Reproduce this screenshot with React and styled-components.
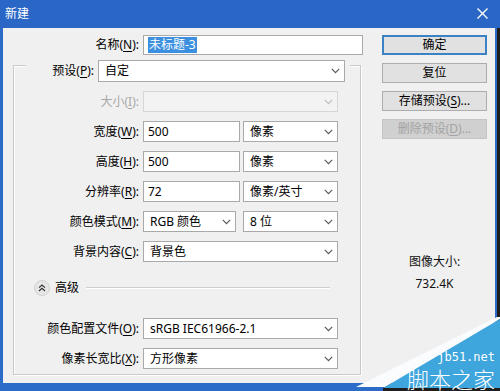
import React from 'react';
import styled, { createGlobalStyle } from 'styled-components';

const Global = createGlobalStyle`
  html, body { margin: 0; padding: 0; background: #1c1c1c; }
  body { font-family: "Noto Sans", "Noto Sans CJK SC", sans-serif; font-size: 12px; color: #000; }
  #root { width: 500px; height: 391px; overflow: hidden; }
  * { box-sizing: border-box; }
`;

const Window = styled.div`
  position: relative;
  width: 500px;
  height: 391px;
  display: flex;
  flex-direction: column;
  background: #2c6bc8;
  overflow: hidden;
`;

const TitleBar = styled.div`
  height: 28px;
  flex: none;
  display: flex;
  align-items: center;
  justify-content: space-between;
  padding: 0 12px 2px 5px;
  color: #fff;
  font-size: 12px;
  background: #2a66c6;
`;

const Frame = styled.div`
  flex: 1;
  display: flex;
  padding: 0 2px 8px 3px;
  border-right: 3px solid #1d1d1d;
`;

const Body = styled.div`
  flex: 1;
  display: flex;
  background: #f0f0f0;
  padding-top: 7px;
`;

const LeftCol = styled.div`
  width: 360px;
  flex: none;
  display: flex;
  flex-direction: column;
`;

const NameRow = styled.div`
  display: grid;
  grid-template-columns: 136px 220px;
  column-gap: 4px;
  align-items: center;
  height: 20px;
`;

const Label = styled.label`
  text-align: right;
  white-space: nowrap;
  line-height: 16px;
  color: ${p => (p.$disabled ? '#a8a8a8' : '#000')};
  u { text-decoration: underline; text-underline-offset: 2px; }
`;

const TextInput = styled.div`
  width: ${p => p.$w}px;
  height: ${p => p.$h || 21}px;
  display: flex;
  align-items: center;
  padding-left: 4px;
  background: #fff;
  border: 1px solid #a9a9a9;
  line-height: 16px;
  white-space: nowrap;
`;

const Selected = styled.span`
  background: #3d8fe0;
  color: #fff;
  padding: 0 1px;
`;

const GroupBox = styled.div`
  margin: 10px 0 0 10px;
  width: 348px;
  border: 1px solid #c9c9c9;
  box-shadow: inset 1px 1px 0 #fff, 1px 1px 0 #fff;
  display: flex;
  flex-direction: column;
  gap: 9px;
  padding-bottom: 5px;
`;

const PresetRow = styled.div`
  align-self: flex-start;
  margin: -6px 0 0 12px;
  padding: 0 5px 0 21px;
  display: grid;
  grid-template-columns: 47px 247px;
  column-gap: 4px;
  align-items: center;
  background: #f0f0f0;
`;

const FieldRow = styled.div`
  display: grid;
  grid-template-columns: 125px 195px;
  column-gap: 4px;
  align-items: center;
  height: 21px;
`;

const Controls = styled.div`
  display: flex;
  justify-content: space-between;
  width: 195px;
`;

const SelectBox = styled.div`
  width: ${p => p.$w}px;
  height: ${p => p.$h || 21}px;
  display: flex;
  align-items: center;
  justify-content: space-between;
  padding: 0 4px 0 6px;
  background: ${p => (p.$disabled ? '#f3f3f3' : '#fff')};
  border: 1px solid ${p => (p.$disabled ? '#d6d6d6' : '#a9a9a9')};
  line-height: 16px;
  white-space: nowrap;
`;

const AdvancedRow = styled.div`
  display: flex;
  align-items: center;
  height: 16px;
  margin: 9px 0 13px;
  padding-left: 20px;
  gap: 5px;
`;

const RoundIcon = styled.span`
  width: 16px;
  height: 16px;
  border-radius: 50%;
  background: #e6e6e6;
  border: 1px solid #d2d2d2;
  display: flex;
  align-items: center;
  justify-content: center;
`;

const AdvText = styled.span`
  line-height: 16px;
`;

const Rule = styled.div`
  flex: 1;
  margin: 0 30px 0 2px;
  height: 2px;
  border-top: 1px solid #cfcfcf;
  border-bottom: 1px solid #fff;
`;

const RightCol = styled.div`
  width: 124px;
  padding-left: 19px;
  display: flex;
  flex-direction: column;
`;

const Buttons = styled.div`
  display: flex;
  flex-direction: column;
  gap: 8px;
`;

const Button = styled.button`
  width: 105px;
  height: 20px;
  padding: 0;
  font-family: "Noto Sans", "Noto Sans CJK SC", sans-serif;
  font-size: 12px;
  line-height: 16px;
  color: ${p => (p.disabled ? '#a3a3a3' : '#000')};
  background: ${p => (p.disabled ? '#d0d0d0' : '#e1e1e1')};
  border: 1px solid ${p => (p.$primary ? '#3a82c4' : p.disabled ? '#c4c4c4' : '#adadad')};
  box-shadow: ${p => (p.$primary ? 'inset 0 0 0 1px #3a82c4' : 'none')};
  u { text-decoration: underline; text-underline-offset: 2px; }
`;

const SizeInfo = styled.div`
  margin-top: 115px;
  display: flex;
  flex-direction: column;
  align-items: center;
  gap: 6px;
  line-height: 16px;
  color: #111;
`;

const Watermark = styled.div`
  position: absolute;
  right: 0;
  bottom: 0;
  width: 180px;
  height: 80px;
  display: flex;
  flex-direction: column;
  align-items: flex-end;
  justify-content: flex-end;
  padding: 0 5px 1px 0;
  pointer-events: none;
`;

const WaterShape = styled.svg`
  position: absolute;
  inset: 0;
`;

const WaterSite = styled.span`
  position: relative;
  font-family: "DejaVu Sans Mono", monospace;
  font-size: 12px;
  line-height: 14px;
  color: #fff;
  margin-bottom: 2px;
`;

const WaterName = styled.span`
  position: relative;
  font-family: "Noto Sans CJK SC", sans-serif;
  font-weight: 300;
  font-size: 22px;
  line-height: 24px;
  color: #fff;
`;

const Chevron = ({ light }) => (
  <svg width="9" height="6" viewBox="0 0 9 6">
    <polyline points="0.8,0.8 4.5,4.6 8.2,0.8" fill="none" stroke={light ? '#bdbdbd' : '#5a5a5a'} strokeWidth="1.2" />
  </svg>
);

const Select = ({ w, h, disabled, children }) => (
  <SelectBox $w={w} $h={h} $disabled={disabled}>
    <span>{children}</span>
    <Chevron light={disabled} />
  </SelectBox>
);

export default function App() {
  return (
    <>
      <Global />
      <Window>
        <TitleBar>
          <span>新建</span>
          <svg width="11" height="11" viewBox="0 0 11 11">
            <path d="M0.5 0.5 L10.5 10.5 M10.5 0.5 L0.5 10.5" stroke="#fff" strokeWidth="1.4" />
          </svg>
        </TitleBar>
        <Frame>
          <Body>
            <LeftCol>
              <NameRow>
                <Label>名称(<u>N</u>):</Label>
                <TextInput $w={220} $h={20}><Selected>未标题-3</Selected></TextInput>
              </NameRow>
              <GroupBox>
                <PresetRow>
                  <Label>预设(<u>P</u>):</Label>
                  <Select w={247} h={22}>自定</Select>
                </PresetRow>
                <FieldRow>
                  <Label $disabled>大小(<u>I</u>):</Label>
                  <Select w={195} disabled></Select>
                </FieldRow>
                <FieldRow>
                  <Label>宽度(<u>W</u>):</Label>
                  <Controls>
                    <TextInput $w={97}>500</TextInput>
                    <Select w={95}>像素</Select>
                  </Controls>
                </FieldRow>
                <FieldRow>
                  <Label>高度(<u>H</u>):</Label>
                  <Controls>
                    <TextInput $w={97}>500</TextInput>
                    <Select w={95}>像素</Select>
                  </Controls>
                </FieldRow>
                <FieldRow>
                  <Label>分辨率(<u>R</u>):</Label>
                  <Controls>
                    <TextInput $w={97}>72</TextInput>
                    <Select w={95}>像素/英寸</Select>
                  </Controls>
                </FieldRow>
                <FieldRow>
                  <Label>颜色模式(<u>M</u>):</Label>
                  <Controls>
                    <Select w={93}>RGB 颜色</Select>
                    <Select w={95}>8 位</Select>
                  </Controls>
                </FieldRow>
                <FieldRow>
                  <Label>背景内容(<u>C</u>):</Label>
                  <Select w={195}>背景色</Select>
                </FieldRow>
                <AdvancedRow>
                  <RoundIcon>
                    <svg width="8" height="8" viewBox="0 0 8 8">
                      <polyline points="1,3.6 4,1 7,3.6" fill="none" stroke="#333" strokeWidth="1.2" />
                      <polyline points="1,7 4,4.4 7,7" fill="none" stroke="#333" strokeWidth="1.2" />
                    </svg>
                  </RoundIcon>
                  <AdvText>高级</AdvText>
                  <Rule />
                </AdvancedRow>
                <FieldRow>
                  <Label>颜色配置文件(<u>O</u>):</Label>
                  <Select w={195}>sRGB IEC61966-2.1</Select>
                </FieldRow>
                <FieldRow>
                  <Label>像素长宽比(<u>X</u>):</Label>
                  <Select w={195}>方形像素</Select>
                </FieldRow>
              </GroupBox>
            </LeftCol>
            <RightCol>
              <Buttons>
                <Button $primary>确定</Button>
                <Button>复位</Button>
                <Button>存储预设(<u>S</u>)...</Button>
                <Button disabled>删除预设(<u>D</u>)...</Button>
              </Buttons>
              <SizeInfo>
                <span>图像大小:</span>
                <span>732.4K</span>
              </SizeInfo>
            </RightCol>
          </Body>
        </Frame>
        <Watermark>
          <WaterShape width="180" height="80" viewBox="0 0 180 80">
            <polygon points="36,76 177,6 180,6 180,8 65,76" fill="#fbfcfd" />
            <polygon points="65,76 180,8 180,80 63,80" fill="#3ea5dd" />
            <rect x="63" y="77" width="117" height="3" fill="#1e1e1e" />
          </WaterShape>
          <WaterSite>jb51.net</WaterSite>
          <WaterName>脚本之家</WaterName>
        </Watermark>
      </Window>
    </>
  );
}
